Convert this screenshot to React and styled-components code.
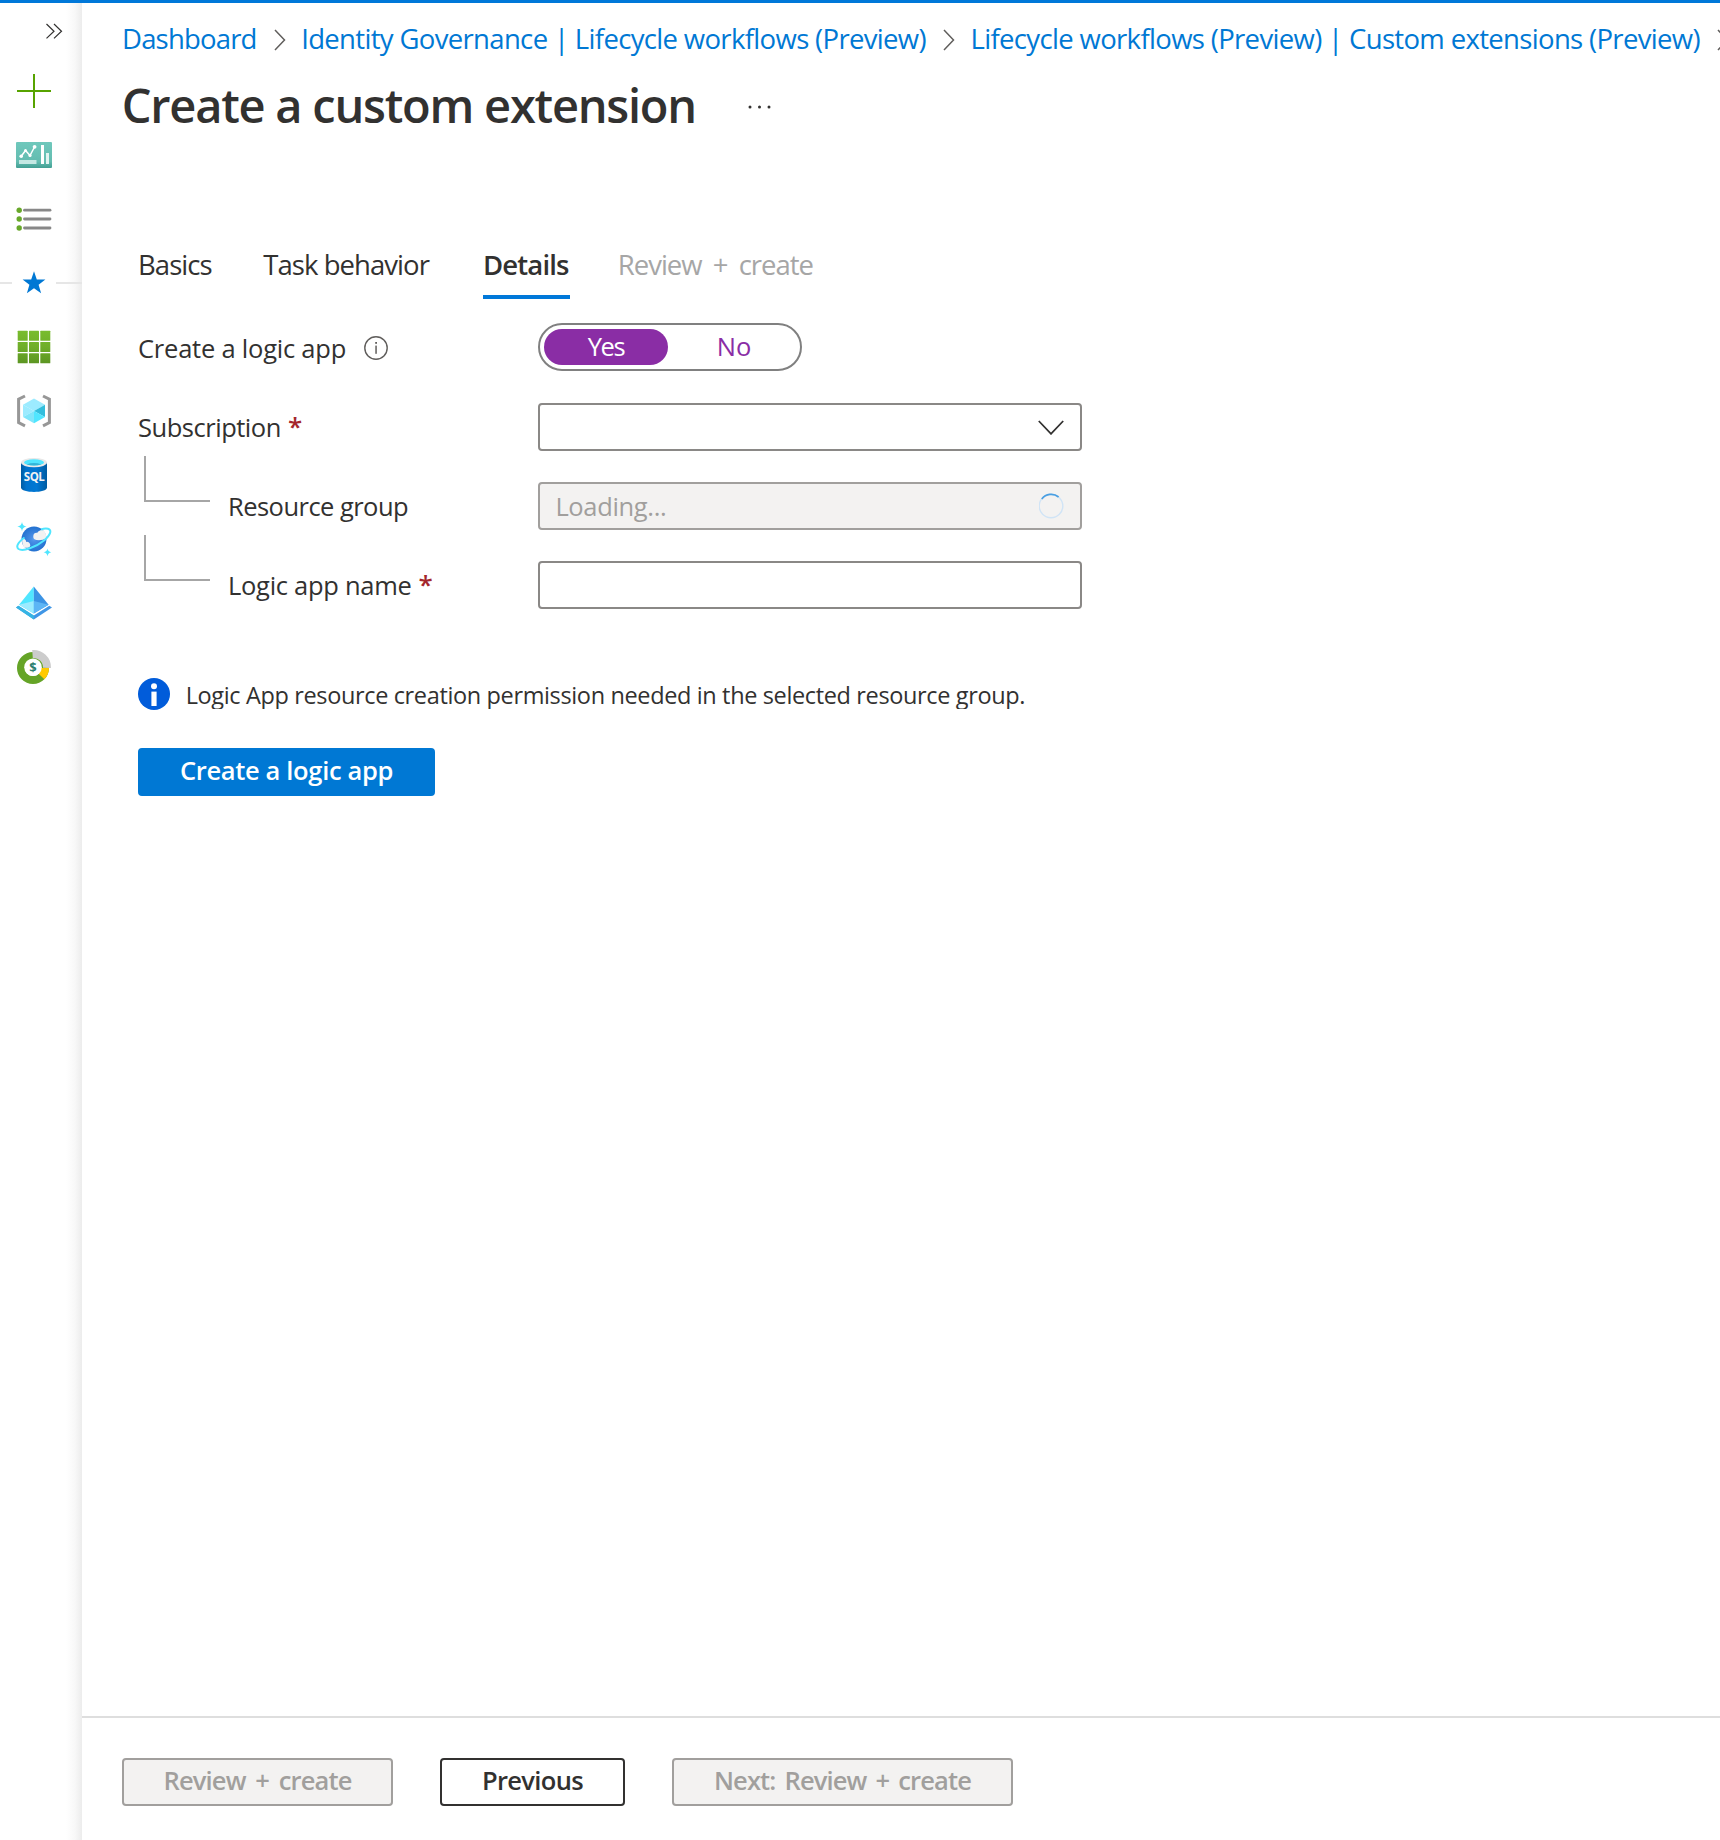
import React from "react";
import styled, { createGlobalStyle } from "styled-components";

const Global = createGlobalStyle`
  *, *::before, *::after { box-sizing: border-box; }
  html, body { margin: 0; padding: 0; background: #fff; overflow: hidden; }
  body { font-family: "Open Sans", "Noto Sans", sans-serif; color: #323130; }
`;

const Portal = styled.div`
  display: flex;
  flex-direction: column;
  width: 1720px;
  height: 1840px;
  overflow: hidden;
  background: #fff;
`;
const Accent = styled.div`
  flex: none;
  height: 3px;
  background: #0078d9;
`;
const Body = styled.div`
  flex: 1;
  display: flex;
  min-height: 0;
`;
const Sidebar = styled.nav`
  flex: none;
  width: 82px;
  display: flex;
  flex-direction: column;
  background: linear-gradient(to right, #fff 66px, #f8f8f8 75px, #ececec 82px);
`;
const Expand = styled.div`
  height: 56px;
  padding: 20px 0 0 45px;
  line-height: 0;
`;
const NavItem = styled.div`
  height: 64px;
  width: 68px;
  display: flex;
  align-items: center;
  justify-content: center;
`;
const Favorites = styled.div`
  height: 64px;
  display: flex;
  align-items: center;
  justify-content: space-between;
`;
const Rule = styled.div`
  width: ${(p) => p.$w}px;
  height: 2px;
  background: #e6e6e6;
`;
const Main = styled.main`
  flex: 1;
  min-width: 0;
  display: flex;
  flex-direction: column;
`;
const Txt = styled.span`
  flex: none;
  font-size: ${(p) => p.$s || 25.5}px;
  font-weight: ${(p) => p.$w || 400};
  letter-spacing: ${(p) => p.$ls || 0}px;
  word-spacing: ${(p) => p.$ws || 0}px;
  color: ${(p) => p.$c || "inherit"};
  white-space: pre;
  line-height: 36px;
`;
const Crumbs = styled.div`
  flex: none;
  height: 72px;
  display: flex;
  align-items: center;
  padding-left: 40px;
  overflow: hidden;
  svg { flex: none; margin: 2px 15.5px 0 17px; }
`;
const TitleRow = styled.div`
  height: 59px;
  display: flex;
  align-items: center;
  padding-left: 39.7px;
  svg { margin: 5px 0 0 52.5px; }
`;
const Tabs = styled.div`
  display: flex;
  margin-top: 95px;
  padding-left: 56px;
`;
const Tab = styled.div`
  height: 70px;
  padding-top: 18px;
  width: ${(p) => p.$width}px;
  margin-right: ${(p) => p.$gap}px;
  border-bottom: 4px solid ${(p) => (p.$active ? "#0078d9" : "transparent")};
`;
const Form = styled.div`
  display: flex;
  flex-direction: column;
  gap: 31px;
  padding: 24px 0 0 56px;
`;
const Row = styled.div`
  height: 48px;
  display: flex;
  align-items: center;
  margin-bottom: ${(p) => p.$mb || 0}px;
`;
const Label = styled.div`
  width: 400px;
  height: 48px;
  flex: none;
  display: flex;
  align-items: center;
  padding-top: ${(p) => p.$drop || 0}px;
  svg { margin-left: 18px; }
`;
const Required = styled.span`
  color: #a4262c;
  font-size: 26px;
  font-weight: 600;
  line-height: 36px;
  margin: 0 0 2px 7px;
`;
const Elbow = styled.div`
  width: 66px;
  height: 46px;
  margin: -26px 18px 0 6px;
  align-self: flex-start;
  border: solid #a6a6a6;
  border-width: 0 0 2px 2px;
`;
const Toggle = styled.div`
  width: 264px;
  height: 48px;
  padding: 4px 0 4px 4px;
  display: flex;
  border: 2px solid #808080;
  border-radius: 24px;
`;
const Option = styled.div`
  flex: none;
  width: ${(p) => (p.$on ? 124 : 132)}px;
  height: 36px;
  padding-bottom: 2px;
  display: flex;
  align-items: center;
  justify-content: center;
  border-radius: 18px;
  background: ${(p) => (p.$on ? "#8a2da5" : "transparent")};
  color: ${(p) => (p.$on ? "#fff" : "#8a2da5")};
`;
const Field = styled.div`
  width: 544px;
  height: 48px;
  display: flex;
  align-items: center;
  justify-content: space-between;
  padding: 0 16px 0 15.4px;
  border: 2px solid ${(p) => (p.$disabled ? "#a19f9d" : "#8a8886")};
  border-radius: 4px;
  background: ${(p) => (p.$disabled ? "#f3f2f1" : "#fff")};
  color: #a19f9d;
  svg { margin-left: auto; }
`;
const Notice = styled.div`
  display: flex;
  align-items: flex-start;
  height: 32px;
  margin: 69px 0 0 56px;
`;
const NoticeText = styled.div`
  display: flex;
  align-items: flex-start;
  height: 32px;
  margin: -1px 0 0 15.7px;
  overflow: hidden;
`;
const Button = styled.div`
  width: ${(p) => p.$width}px;
  height: 48px;
  display: flex;
  align-items: center;
  justify-content: center;
  padding-bottom: 4px;
  border-radius: 4px;
  border: 2px solid ${(p) => p.$border};
  background: ${(p) => p.$bg};
  color: ${(p) => p.$fg};
`;
const Action = styled.div`
  margin: 38px 0 0 56px;
`;
const Footer = styled.footer`
  margin-top: auto;
  height: 124px;
  display: flex;
  gap: 47px;
  border-top: 2px solid #dedede;
  padding: 40px 0 0 40px;
`;

const CrumbChevron = () => (
  <svg width="12" height="22" viewBox="0 0 12 22" fill="none" stroke="#605e5c" strokeWidth="1.5">
    <path d="M1 1 L10.5 11 L1 21" />
  </svg>
);
const InfoOutline = () => (
  <svg width="24" height="24" viewBox="0 0 24 24">
    <circle cx="12" cy="12" r="11.2" fill="none" stroke="#605e5c" strokeWidth="1.4" />
    <rect x="11.2" y="6" width="1.8" height="1.8" fill="#605e5c" />
    <rect x="11.3" y="9.6" width="1.5" height="8.2" fill="#605e5c" />
  </svg>
);
const InfoSolid = () => (
  <svg width="32" height="32" viewBox="0 0 32 32">
    <circle cx="16" cy="16" r="16" fill="#015cda" />
    <circle cx="16" cy="8.2" r="3" fill="#fff" />
    <rect x="13.4" y="13.6" width="5.2" height="14.4" fill="#fff" />
  </svg>
);
const Caret = () => (
  <svg width="26" height="15" viewBox="0 0 26 15" style={undefined}>
    <path d="M.8 1 L13 13.8 L25.2 1" fill="none" stroke="#323130" strokeWidth="1.8" />
  </svg>
);
const Spinner = () => (
  <svg width="25" height="26" viewBox="0 0 25 26">
    <circle cx="12" cy="13" r="11.8" fill="none" stroke="#d0e4f6" strokeWidth="1.4" />
    <path d="M2.8 6 A11.8 11.8 0 0 1 19.6 4" fill="none" stroke="#4a9fe2" strokeWidth="1.7" />
  </svg>
);

const DashboardIcon = () => (
  <svg width="36" height="26" viewBox="0 0 36 26">
    <defs>
      <linearGradient id="dash" x1="0" y1="0" x2="0" y2="1">
        <stop offset="0" stopColor="#6fc8bc" /><stop offset=".75" stopColor="#63bcb0" /><stop offset="1" stopColor="#429f93" />
      </linearGradient>
    </defs>
    <rect width="36" height="26" rx="1" fill="url(#dash)" />
    <path d="M5 14.5 L9.5 8.5 L14 13.5 L18.5 5" fill="none" stroke="#fff" strokeWidth="1.5" />
    <circle cx="5.2" cy="14.2" r="1.8" fill="#fff" /><circle cx="9.5" cy="8.6" r="1.5" fill="#fff" />
    <circle cx="14" cy="13.5" r="1.6" fill="#fff" /><circle cx="18.6" cy="4.8" r="1.9" fill="#fff" />
    <rect x="3" y="18" width="17.5" height="4" fill="#c4e8e3" />
    <rect x="25" y="3" width="3" height="19" fill="#fff" />
    <rect x="30" y="11" width="3" height="11" fill="#e0f3f0" />
  </svg>
);
const ListIcon = () => (
  <svg width="36" height="26" viewBox="0 0 36 26">
    {[4.2, 13, 22].map((y) => (
      <g key={y}>
        <circle cx="3.2" cy={y} r="2.7" fill="#68a82a" />
        <path d={`M8.5 ${y} H34`} stroke="#888" strokeWidth="2.8" strokeLinecap="round" />
      </g>
    ))}
  </svg>
);
const StarIcon = () => (
  <svg width="24" height="24" viewBox="0 0 24 24">
    <path d="M12 .3 L14.8 8.5 H23.4 L16.6 13.7 L19.1 22.2 L12 17.2 L4.9 22.2 L7.4 13.7 L.6 8.5 H9.2 Z" fill="#0078d4" />
  </svg>
);
const GridIcon = () => (
  <svg width="34" height="34" viewBox="0 0 34 34">
    <defs>
      <linearGradient id="grid" gradientUnits="userSpaceOnUse" x1="0" y1="0" x2="0" y2="34">
        <stop offset="0" stopColor="#79bd2e" /><stop offset=".5" stopColor="#6fae29" /><stop offset="1" stopColor="#5b9422" />
      </linearGradient>
    </defs>
    {[0.7, 12, 23.3].flatMap((x) => [0.7, 12, 23.3].map((y) => (
      <rect key={`${x}-${y}`} x={x} y={y} width="10" height="10" rx=".5" fill="url(#grid)" />
    )))}
  </svg>
);
const ResourceGroupIcon = () => (
  <svg width="36" height="34" viewBox="0 0 36 34">
    <path d="M9 2 L2.6 5.2 V28.6 L9 31.8" fill="none" stroke="#979797" strokeWidth="3" />
    <path d="M27 2 L33.4 5.2 V28.6 L27 31.8" fill="none" stroke="#979797" strokeWidth="3" />
    <path d="M18 4.6 L29 10.8 L18 17 L7 10.8 Z" fill="#9cebff" />
    <path d="M7 10.8 L18 17 L7 23 Z" fill="#9cebff" />
    <path d="M29 10.8 L18 17 L29 23 Z" fill="#32bedd" />
    <path d="M7 23 L18 17 V29.3 Z" fill="#7fe6fb" />
    <path d="M29 23 L18 17 V29.3 Z" fill="#50e6ff" />
  </svg>
);
const SqlIcon = () => (
  <svg width="28" height="36" viewBox="0 0 28 36">
    <defs>
      <linearGradient id="sql"><stop offset="0" stopColor="#005ba1" /><stop offset=".2" stopColor="#0072cc" /><stop offset=".6" stopColor="#0078d4" /><stop offset="1" stopColor="#005ba1" /></linearGradient>
    </defs>
    <path d="M1 5.5 V30.5 C1 36.4 27 36.4 27 30.5 V5.5 Z" fill="url(#sql)" />
    <ellipse cx="14" cy="5.6" rx="13" ry="4.7" fill="#e8e8e8" />
    <ellipse cx="14" cy="5.4" rx="10" ry="3.1" fill="#50e6ff" />
    <path d="M6.5 7.4 Q14 4.8 21.5 7.4 Q14 9.6 6.5 7.4" fill="#32b5d8" />
    <text x="14.3" y="24.3" textAnchor="middle" fontFamily="Open Sans, sans-serif" fontWeight="700" fontSize="11.5" fill="#f2f2f2" textLength="21">SQL</text>
  </svg>
);
const CosmosIcon = () => (
  <svg width="36" height="36" viewBox="0 0 36 36">
    <defs>
      <radialGradient id="cosmos"><stop offset="0" stopColor="#5ea0ef" /><stop offset=".2" stopColor="#4b8fe6" /><stop offset="1" stopColor="#2371d0" /></radialGradient>
    </defs>
    <circle cx="18" cy="18" r="12.5" fill="url(#cosmos)" />
    <path d="M20.5 19 a3.6 3.6 0 0 1 .8 -7.2 a4.6 4.6 0 0 1 7.2 -1.6 q2.4 3.8 1.8 7.2 q-4 2.2 -9.8 1.6 Z" fill="#f2f2f2" />
    <path d="M6.3 17.5 a4 4 0 0 1 4 3.5 a3.2 3.2 0 0 1 3.2 5.2 q-3 1 -5.4 .2 q-2.6 -3.6 -1.8 -8.9" fill="#f2f2f2" />
    <path d="M8.5 16.5 C1 22 0 26 2.5 28 C7 31 20 26 28 19.5 C35 13.5 36 9 32 7.8 C30 7.2 27.5 7.6 25 8.5" fill="none" stroke="#50e6ff" strokeWidth="2" />
    <path d="M6 1 Q6.6 5 10.5 5.6 Q6.6 6.2 6 10.3 Q5.4 6.2 1.3 5.6 Q5.4 5 6 1" fill="#50e6ff" />
    <path d="M31.5 27.5 Q32 30.8 35.3 31.3 Q32 31.8 31.5 35.2 Q31 31.8 27.6 31.3 Q31 30.8 31.5 27.5" fill="#50e6ff" />
  </svg>
);
const DirectoryIcon = () => (
  <svg width="36" height="34" viewBox="0 0 36 34">
    <path d="M0 21.5 L2.4 19.7 L17.8 29.5 L33.3 19.7 L36 21.5 L17.8 33.6 Z" fill="#3f96e6" />
    <path d="M17.8 .5 L3 18.7 L17.8 27.6 Z" fill="#50e6ff" />
    <path d="M17.8 .5 L32.6 18.7 L17.8 27.6 Z" fill="#3b93e4" />
    <path d="M3 18.7 L17.8 15 V27.6 Z" fill="#9cebff" />
    <path d="M32.6 18.7 L17.8 15 V27.6 Z" fill="#5cb5f5" />
    <path d="M0 21.5 L2.4 19.7 L17.8 29.5 V33.6 Z" fill="#35b5e4" />
  </svg>
);
const CostIcon = () => (
  <svg width="36" height="36" viewBox="0 0 36 36">
    <circle cx="17" cy="19" r="12" fill="none" stroke="#65a427" strokeWidth="8" />
    <path d="M29 19 A12 12 0 0 1 25.5 27.5" fill="none" stroke="#ffca00" strokeWidth="8" />
    <path d="M16.5 5 A13.5 13.5 0 0 1 31 18.8" fill="none" stroke="#ccc" strokeWidth="8" />
    <circle cx="17" cy="18.3" r="8.8" fill="#fff" />
    <text x="17" y="23" textAnchor="middle" fontFamily="Open Sans, sans-serif" fontWeight="700" fontSize="13" fill="#2b7f70">$</text>
  </svg>
);

const LINK = "#0078d4";
const DISABLED = { $border: "#a19f9d", $bg: "#f3f2f1", $fg: "#a19f9d" };

export default function App() {
  return (
    <Portal>
      <Global />
      <Accent />
      <Body>
        <Sidebar>
          <Expand>
            <svg width="18" height="17" viewBox="0 0 18 17" fill="none" stroke="#323130" strokeWidth="1.2">
              <path d="M1.5 1 L9 8.2 L1.5 15.4 M9 1 L16.5 8.2 L9 15.4" />
            </svg>
          </Expand>
          <NavItem>
            <svg width="34" height="34"><path d="M17 0 V34 M0 17 H34" stroke="#57a300" strokeWidth="2" /></svg>
          </NavItem>
          <NavItem><DashboardIcon /></NavItem>
          <NavItem><ListIcon /></NavItem>
          <Favorites><Rule $w={12} /><StarIcon /><Rule $w={26} /></Favorites>
          <NavItem><GridIcon /></NavItem>
          <NavItem><ResourceGroupIcon /></NavItem>
          <NavItem><SqlIcon /></NavItem>
          <NavItem><CosmosIcon /></NavItem>
          <NavItem><DirectoryIcon /></NavItem>
          <NavItem><CostIcon /></NavItem>
        </Sidebar>
        <Main>
          <Crumbs>
            <Txt $s={27.5} $ls={-0.812} $c={LINK}>Dashboard</Txt>
            <CrumbChevron />
            <Txt $s={27.5} $ls={-0.662} $c={LINK}>Identity Governance | Lifecycle workflows (Preview)</Txt>
            <CrumbChevron />
            <Txt $s={27.5} $ls={-0.662} $c={LINK}>Lifecycle workflows (Preview) | Custom extensions (Preview)</Txt>
            <CrumbChevron />
          </Crumbs>
          <TitleRow>
            <Txt $s={47} $w={600} $ls={-1.239}>Create a custom extension</Txt>
            <svg width="24" height="4">
              <g fill="#323130"><circle cx="2" cy="2" r="1.5" /><circle cx="11.5" cy="2" r="1.5" /><circle cx="21" cy="2" r="1.5" /></g>
            </svg>
          </TitleRow>
          <Tabs>
            <Tab $width={73} $gap={52.3}><Txt $s={27.5} $ls={-0.95}>Basics</Txt></Tab>
            <Tab $width={165} $gap={54.7}><Txt $s={27.5} $ls={-0.95}>Task behavior</Txt></Tab>
            <Tab $width={87} $gap={47.8} $active><Txt $s={27.5} $w={600} $ls={-0.85}>Details</Txt></Tab>
            <Tab $width={200} $gap={0}><Txt $s={27.5} $ls={-1} $ws={5} $c="#a6a6a6">Review + create</Txt></Tab>
          </Tabs>
          <Form>
            <Row $mb={1}>
              <Label $drop={2}><Txt $ls={-0.222}>Create a logic app</Txt><InfoOutline /></Label>
              <Toggle>
                <Option $on><Txt $ls={-1.4}>Yes</Txt></Option>
                <Option><Txt>No</Txt></Option>
              </Toggle>
            </Row>
            <Row>
              <Label><Txt $ls={-0.474}>Subscription</Txt><Required>*</Required></Label>
              <Field><Caret /></Field>
            </Row>
            <Row>
              <Label><Elbow /><Txt $ls={-0.539}>Resource group</Txt></Label>
              <Field $disabled><Txt $ls={-0.349}>Loading...</Txt><Spinner /></Field>
            </Row>
            <Row>
              <Label><Elbow /><Txt $ls={-0.283}>Logic app name</Txt><Required>*</Required></Label>
              <Field />
            </Row>
          </Form>
          <Notice>
            <InfoSolid />
            <NoticeText>
              <Txt $s={23.5} $ls={-0.361}>Logic App resource creation permission needed in the selected resource group.</Txt>
            </NoticeText>
          </Notice>
          <Action>
            <Button $width={297} $border="#0078d4" $bg="#0078d4" $fg="#fff">
              <Txt $w={600} $ls={-0.338}>Create a logic app</Txt>
            </Button>
          </Action>
          <Footer>
            <Button $width={271} {...DISABLED}><Txt $w={600} $ls={-0.85} $ws={3.9}>Review + create</Txt></Button>
            <Button $width={185} $border="#323130" $bg="#fff" $fg="#323130"><Txt $w={600} $ls={-0.638}>Previous</Txt></Button>
            <Button $width={341} {...DISABLED}><Txt $w={600} $ls={-0.85} $ws={3.2}>Next: Review + create</Txt></Button>
          </Footer>
        </Main>
      </Body>
    </Portal>
  );
}
